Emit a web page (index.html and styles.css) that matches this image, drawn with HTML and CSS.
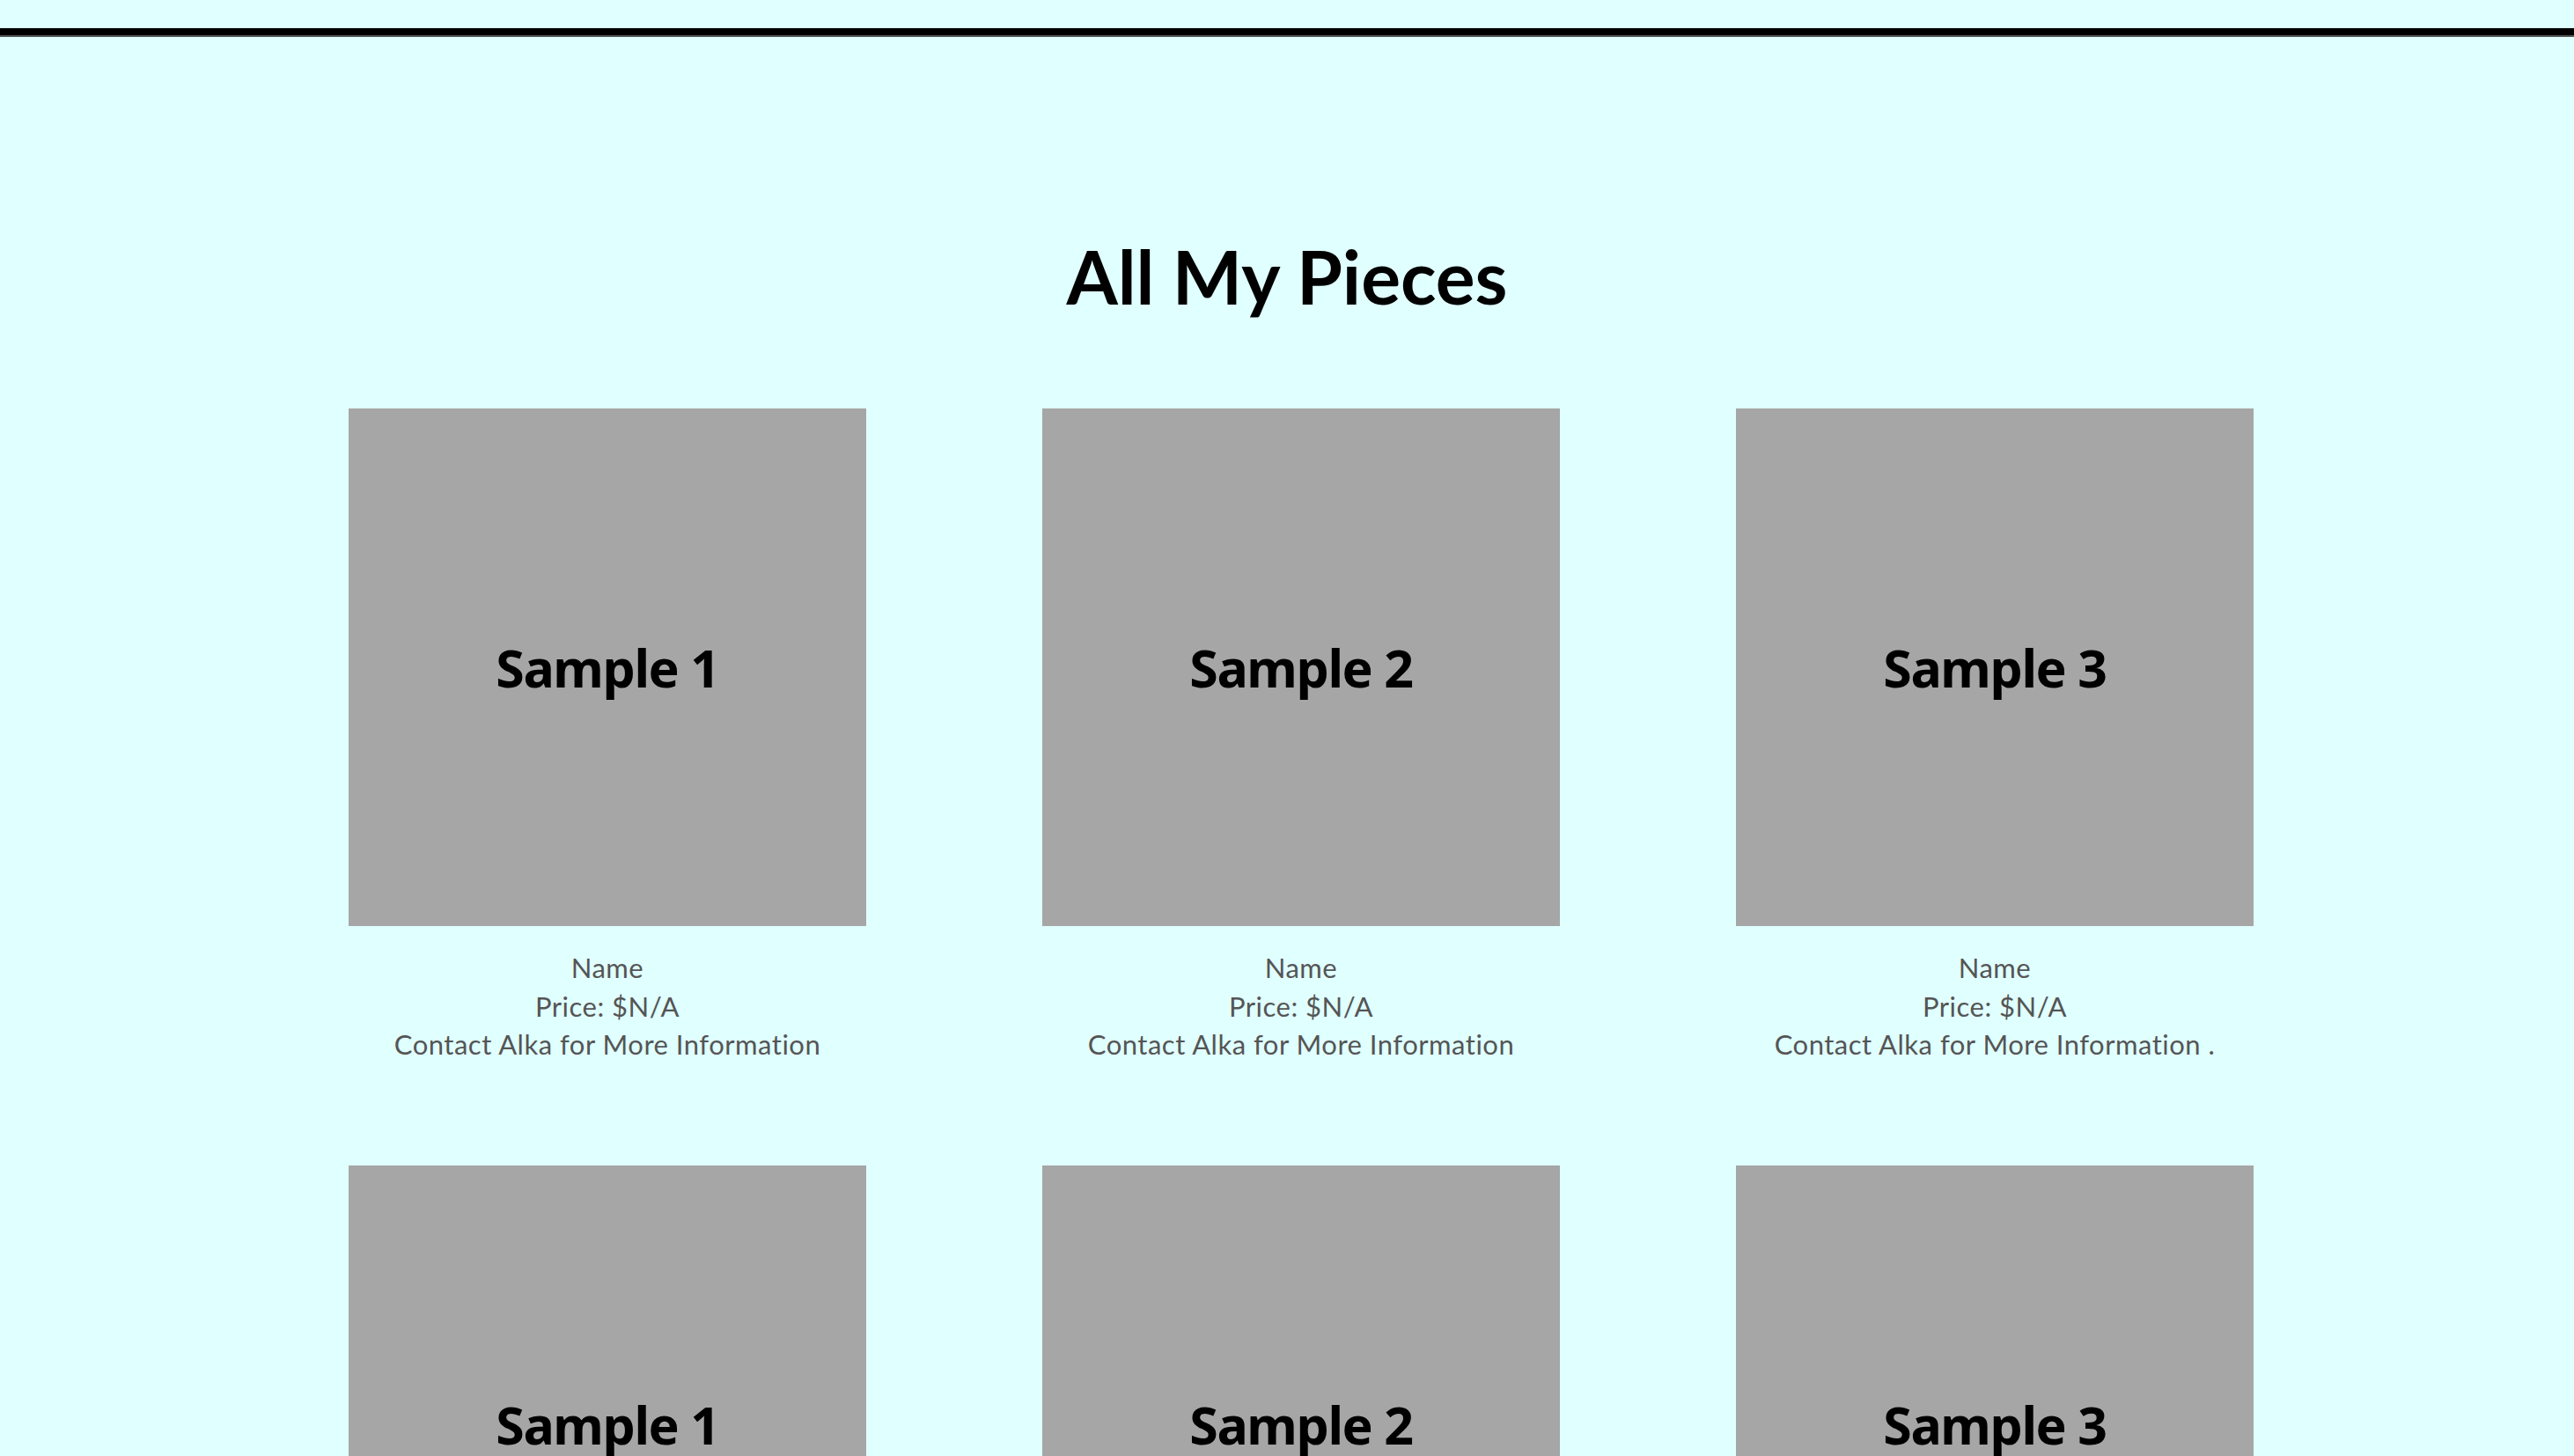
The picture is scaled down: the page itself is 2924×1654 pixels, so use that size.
FILE: index.html
```html
<!DOCTYPE html>
<html lang="en">
<head>
<meta charset="utf-8">
<title>All My Pieces</title>
<link rel="stylesheet" href="styles.css">
</head>
<body>
<div class="topbar"></div>
<main class="gallery">
  <h1 class="title">All My Pieces</h1>
  <div class="grid">
    <div class="piece">
      <div class="thumb">Sample 1</div>
      <div class="caption"><div>Name</div><div>Price: $N/A</div><div>Contact Alka for More Information</div></div>
    </div>
    <div class="piece">
      <div class="thumb">Sample 2</div>
      <div class="caption"><div>Name</div><div>Price: $N/A</div><div>Contact Alka for More Information</div></div>
    </div>
    <div class="piece">
      <div class="thumb">Sample 3</div>
      <div class="caption"><div>Name</div><div>Price: $N/A</div><div>Contact Alka for More Information .</div></div>
    </div>
    <div class="piece">
      <div class="thumb">Sample 1</div>
      <div class="caption"><div>Name</div><div>Price: $N/A</div><div>Contact Alka for More Information</div></div>
    </div>
    <div class="piece">
      <div class="thumb">Sample 2</div>
      <div class="caption"><div>Name</div><div>Price: $N/A</div><div>Contact Alka for More Information</div></div>
    </div>
    <div class="piece">
      <div class="thumb">Sample 3</div>
      <div class="caption"><div>Name</div><div>Price: $N/A</div><div>Contact Alka for More Information</div></div>
    </div>
  </div>
</main>
</body>
</html>
```
FILE: styles.css
```css
html, body {
  margin: 0;
  padding: 0;
  background: #e0ffff;
}
body {
  font-family: "Lato", "Liberation Sans", sans-serif;
}
.topbar {
  margin-top: 32px;
  height: 0;
  border-top: 8px solid #000;
  border-bottom: 2px solid #555;
}
.gallery {
  padding-top: 222px;
}
.title {
  margin: 0;
  text-align: center;
  font-family: "Lato", sans-serif;
  font-weight: 700;
  font-size: 84px;
  line-height: 100px;
  color: #000;
}
.grid {
  display: grid;
  grid-template-columns: repeat(3, 588px);
  column-gap: 200px;
  row-gap: 115.5px;
  margin: 100px 0 0 396px;
}
.thumb {
  width: 588px;
  height: 588px;
  background: #a6a6a6;
  display: flex;
  align-items: center;
  justify-content: center;
  font-family: "Noto Sans", sans-serif;
  font-weight: 700;
  font-size: 59px;
  letter-spacing: -1.4px;
  color: #000;
}
.caption {
  margin-top: 26px;
  text-align: center;
  font-family: "Lato", sans-serif;
  font-size: 31px;
  letter-spacing: 0.5px;
  line-height: 43.5px;
  color: #555;
}
```
